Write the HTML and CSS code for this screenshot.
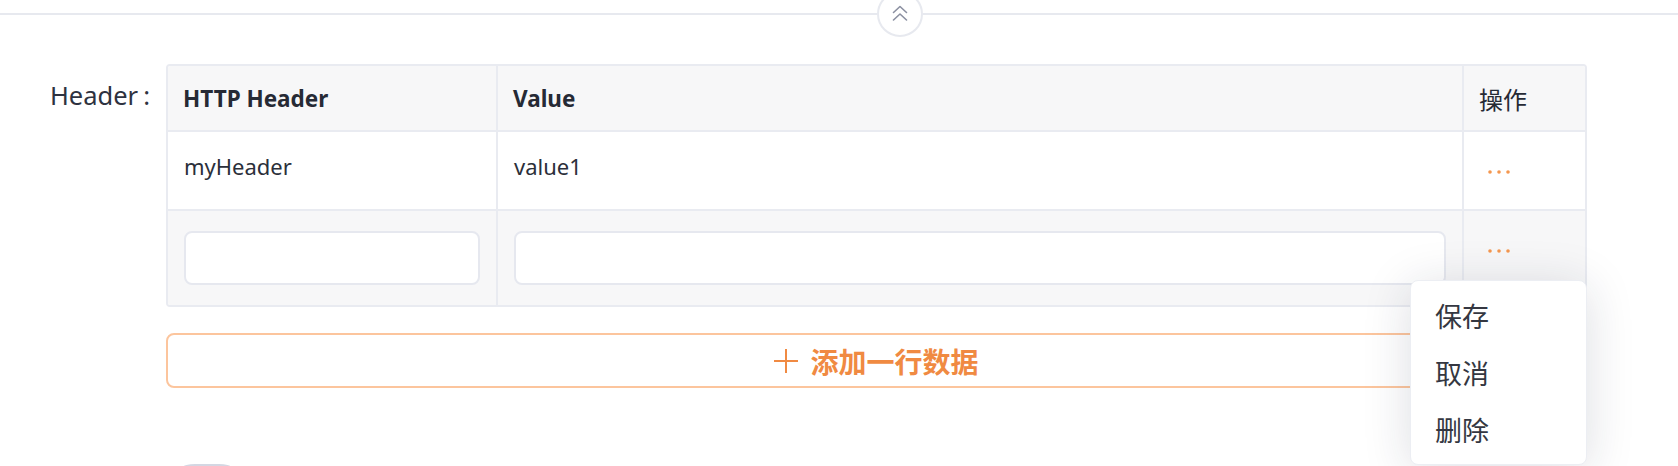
FILE: index.html
```html
<!DOCTYPE html>
<html lang="zh-CN">
<head>
<meta charset="utf-8">
<title>Header</title>
<link rel="stylesheet" href="styles.css">
</head>
<body>
<div class="collapse-bar">
  <span class="collapse-line left"></span>
  <button class="collapse-btn" type="button" aria-label="收起">
    <svg width="16" height="16" viewBox="0 0 16 16" fill="none" stroke="#8b90a1" stroke-width="1.6" stroke-linecap="round" stroke-linejoin="round">
      <path d="M1.5 7.5 L8 1.5 L14.5 7.5"/>
      <path d="M1.5 15 L8 9 L14.5 15"/>
    </svg>
  </button>
  <span class="collapse-line right"></span>
</div>

<div class="form">
  <div class="form-label">Header<span class="colon">:</span></div>
  <div class="form-control">
    <div class="table">
      <div class="cell head">HTTP Header</div>
      <div class="cell head">Value</div>
      <div class="cell head op-head last-col">操作</div>

      <div class="cell body">myHeader</div>
      <div class="cell body">value1</div>
      <div class="cell body last-col">
        <svg class="more" width="24" height="8" viewBox="0 0 24 8" fill="#f4974f"><circle cx="2" cy="4" r="1.8"/><circle cx="11" cy="4" r="1.8"/><circle cx="20" cy="4" r="1.8"/></svg>
      </div>

      <div class="cell edit last-row"><input class="input" type="text"></div>
      <div class="cell edit last-row"><input class="input" type="text"></div>
      <div class="cell edit edit-op last-row last-col">
        <svg class="more" width="24" height="8" viewBox="0 0 24 8" fill="#f4974f"><circle cx="2" cy="4" r="1.8"/><circle cx="11" cy="4" r="1.8"/><circle cx="20" cy="4" r="1.8"/></svg>
      </div>
    </div>

    <button class="add-btn" type="button">
      <svg width="24" height="24" viewBox="0 0 24 24" fill="none" stroke="#f08a42" stroke-width="2"><path d="M12 0 V24 M0 12 H24"/></svg>
      <span>添加一行数据</span>
    </button>

    <div class="switch"></div>
  </div>
</div>

<ul class="dropdown">
  <li>保存</li>
  <li>取消</li>
  <li>删除</li>
</ul>
</body>
</html>
```

FILE: styles.css
```css
html, body {
  margin: 0;
  padding: 0;
  overflow: hidden;
  background: #ffffff;
}
body {
  font-family: "Noto Sans", "Noto Sans CJK SC", sans-serif;
  color: #2b2f3a;
  position: relative;
  height: 466px;
}

.collapse-bar {
  display: flex;
  align-items: center;
  height: 46px;
  margin-top: -9px;
}
.collapse-line {
  height: 2px;
  background: #e7e9ef;
}
.collapse-line.left { width: 877px; }
.collapse-line.right { flex: 1; }
.collapse-btn {
  width: 46px;
  height: 46px;
  padding: 0 0 14px;
  border: 2px solid #e7e9ef;
  border-radius: 50%;
  background: #ffffff;
  display: flex;
  align-items: flex-end;
  justify-content: center;
  box-sizing: border-box;
}

.form {
  display: grid;
  grid-template-columns: 166px 1421px;
  margin-top: 27px;
}
.form-label {
  font-size: 25.5px;
  line-height: 62px;
  text-align: right;
  padding-right: 16px;
  color: #2e3240;
  white-space: nowrap;
}
.colon {
  padding-left: 5px;
}

.table {
  display: grid;
  grid-template-columns: 330px 966px 1fr;
  border: 2px solid #e9ebf1;
  border-radius: 4px;
  overflow: hidden;
}
.cell {
  border-right: 2px solid #e9ebf1;
  border-bottom: 2px solid #e9ebf1;
  box-sizing: border-box;
}
.last-col { border-right: none; }
.last-row { border-bottom: none; }

.head {
  height: 66px;
  background: #f7f7f8;
  display: flex;
  align-items: center;
  padding: 0 15px;
  font-size: 22.5px;
  font-weight: 700;
  color: #262a35;
}
.op-head {
  font-weight: 400;
  font-size: 24px;
}
.body {
  height: 79px;
  padding: 18px 16px 0;
  font-size: 22px;
  line-height: 33px;
  background: #ffffff;
}
.edit {
  height: 94px;
  padding: 20px 16px;
  background: #f7f7f8;
}
.edit-op {
  padding: 18px 16px 0;
}
.more {
  display: block;
  margin-top: 18px;
  margin-left: 8px;
}
.input {
  display: block;
  width: 100%;
  height: 54px;
  box-sizing: border-box;
  border: 2px solid #e6e8ef;
  border-radius: 8px;
  background: #ffffff;
  font: inherit;
  outline: none;
}

.add-btn {
  display: flex;
  align-items: center;
  justify-content: center;
  gap: 12px;
  width: 100%;
  height: 55px;
  margin-top: 26px;
  box-sizing: border-box;
  border: 2px solid #fcc59d;
  border-radius: 8px;
  background: #ffffff;
  color: #f08a42;
  font-family: "Noto Sans CJK SC", "Noto Sans", sans-serif;
  font-size: 28px;
  font-weight: 700;
  padding: 0;
}

.switch {
  width: 48px;
  height: 3px;
  margin: 76px 0 0 17px;
  border-radius: 12px 12px 0 0 / 3px 3px 0 0;
  background: #d4d7e3;
}

.dropdown {
  position: absolute;
  left: 1410px;
  top: 280px;
  width: 177px;
  height: 185px;
  margin: 0;
  padding: 7px 0 0;
  list-style: none;
  box-sizing: border-box;
  background: #ffffff;
  border: 1px solid #eceef3;
  border-radius: 8px;
  box-shadow: 0 6px 48px rgba(30, 35, 60, 0.15);
}
.dropdown li {
  height: 57px;
  line-height: 56px;
  padding-left: 24px;
  font-family: "Noto Sans CJK SC", sans-serif;
  font-size: 27px;
  color: #343741;
}
```
